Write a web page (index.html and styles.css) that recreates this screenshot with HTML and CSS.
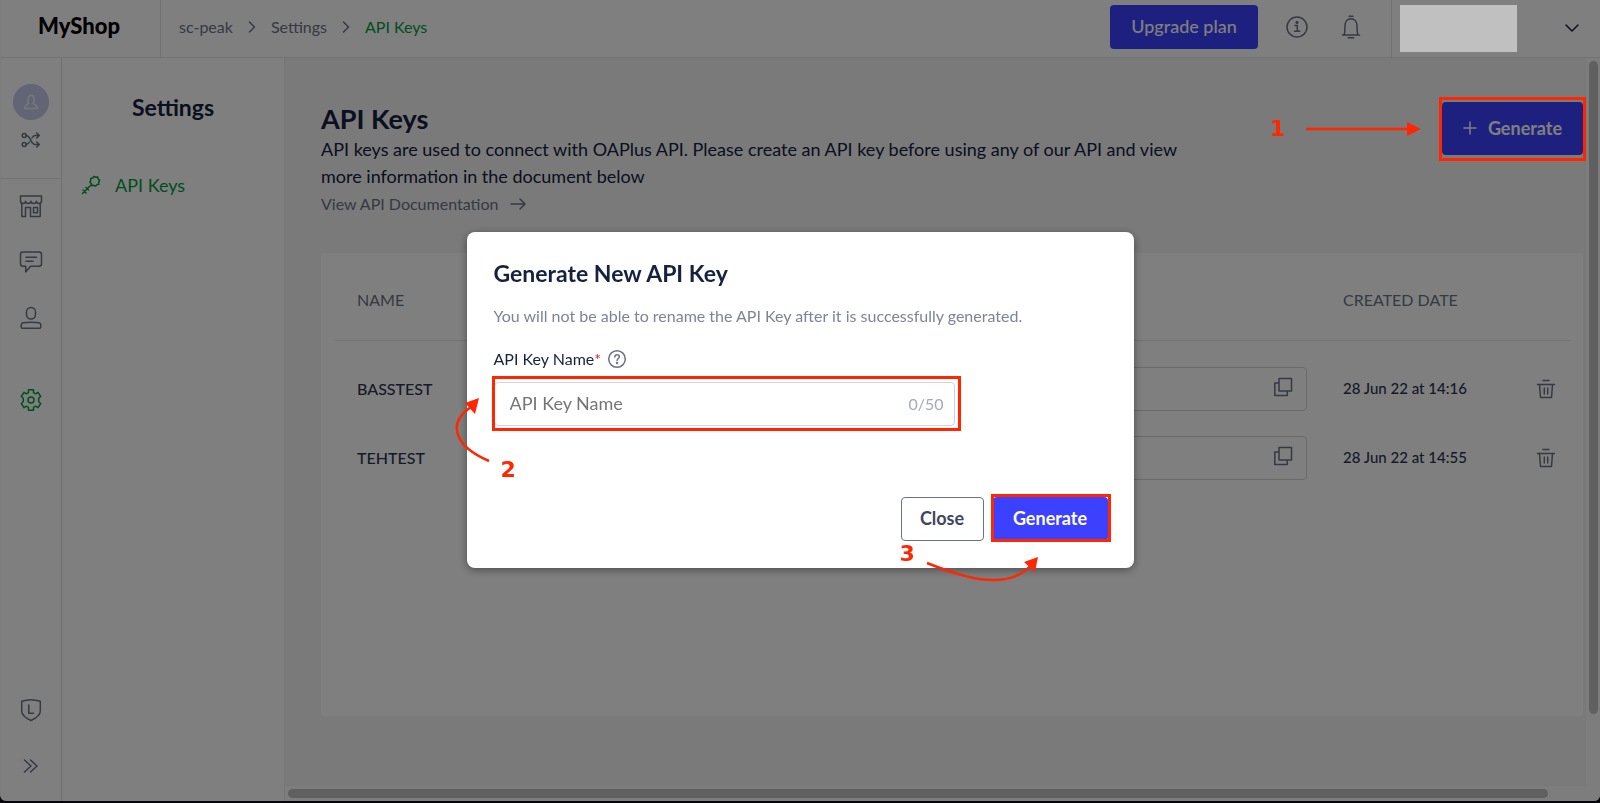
FILE: index.html
```html
<!DOCTYPE html>
<html lang="en">
<head>
	<title>API Keys - MyShop</title>
	<meta charset="UTF-8">
	<link rel="stylesheet" href="styles.css">
</head>
<body>
	<div class="window">
		<header class="topbar">
			<div class="logo">MyShop</div>
			<nav class="breadcrumb" aria-label="Breadcrumb">
				<a href="#">sc-peak</a>
				<svg width="8" height="12" viewBox="0 0 8 12"><path d="M1.5 1l5 5-5 5" /></svg>
				<a href="#">Settings</a>
				<svg width="8" height="12" viewBox="0 0 8 12"><path d="M1.5 1l5 5-5 5" /></svg>
				<a href="#" class="current">API Keys</a>
			</nav>
			<button type="button" class="btn primary upgrade">Upgrade plan</button>
			<button type="button" class="icon_button info" aria-label="Information">
				<svg width="24" height="24" viewBox="0 0 24 24"><circle cx="12" cy="12" r="10" /><path d="M10 10.5h2.3v5.5M9.5 16.3h5.3" /><circle cx="12" cy="7.4" r="0.8" class="dot" /></svg>
			</button>
			<button type="button" class="icon_button bell" aria-label="Notifications">
				<svg width="24" height="24" viewBox="0 0 24 24"><path d="M10 1.2h4M9.3 22.8h5.4M3.5 20h17M5 20c1-2 .9-4 .9-8.500C5.900 6.500 8.500 3.700 12 3.700s6.100 2.800 6.100 7.800c0 4.500 0 6.500 .9 8.500" /></svg>
			</button>
			<div class="account">
				<div class="account_name"></div>
				<button type="button" class="icon_button dark" aria-label="Account menu">
					<svg width="16" height="10" viewBox="0 0 16 10"><path d="M2 2l6 6 6-6" /></svg>
				</button>
			</div>
		</header>
		<div class="main">
			<nav class="rail" aria-label="Main">
				<div class="rail_top">
					<a href="#" class="avatar" aria-label="Profile">
						<svg width="16" height="16" viewBox="0 0 16 16"><path d="M5.800 9.200C4.300 7.500 4.400 1.200 8 1.200s3.700 6.300 2.200 8c.5 1.500 4.300 1.300 4.300 5.300h-13c0-4 3.800-3.800 4.300-5.300z" /></svg>
					</a>
					<a href="#" aria-label="Switch shop">
						<svg width="20" height="16" viewBox="0 0 20 16"><circle cx="3.200" cy="3.500" r="2" /><circle cx="3.200" cy="12.500" r="2" /><path d="M5 3.500c5 0 4.500 9 9 9h4M5 12.500c2 0 2.700-1 3.500-2.500M11 6c.8-1.500 1.500-2.500 3-2.500h4M15.700 1l2.600 2.500L15.700 6M15.700 10l2.600 2.500-2.600 2.500" /></svg>
					</a>
				</div>
				<a href="#" aria-label="Store">
					<svg width="24" height="24" viewBox="0 0 24 24"><path d="M1.500 2h21v5c0 1.500-1 2.500-2.500 2.500S17.400 8.500 17.400 7.300c0 1.300-1.200 2.200-2.700 2.200S12 8.500 12 7.300c0 1.300-1.200 2.200-2.700 2.200s-2.700-1-2.700-2.200c0 1.300-1.100 2.200-2.600 2.200S1.500 8.500 1.500 7zM2.800 9.300v13.200h3.700v-9h5v9h9.700V9.300M14.500 13.500h4v5.200h-4z" /></svg>
				</a>
				<a href="#" aria-label="Chat">
					<svg width="24" height="24" viewBox="0 0 24 24"><path d="M4 2h16c1.500 0 2.500 1 2.500 2.500v9.300c0 1.500-1 2.500-2.500 2.500h-8.500L6.700 22v-5.700H4c-1.500 0-2.500-1-2.500-2.500V4.500C1.500 3 2.500 2 4 2zM7 7.200h10.500M7 11.300h7" /></svg>
				</a>
				<a href="#" aria-label="Contacts">
					<svg width="24" height="24" viewBox="0 0 24 24"><rect x="7.500" y="1.500" width="9" height="11.500" rx="4.500" /><path d="M2.200 19c0-1.500 .8-2 2-2.200 5-.8 10.600-.8 15.600 0 1.200.2 2 .7 2 2.200v2c0 .8-.5 1.200-1.200 1.200H3.400c-.7 0-1.200-.4-1.200-1.200z" /></svg>
				</a>
				<a href="#" class="active" aria-label="Settings">
					<svg width="24" height="24" viewBox="0 0 24 24"><path d="M9.500 1.800h5v2.900l2 1.100 2.500-1.500 2.700 4.200-2 1.700v3.600l2 1.700-2.700 4.200-2.500-1.500-2 1.100v2.900h-5v-2.900l-2-1.100L5 19.700l-2.700-4.200 2-1.700v-3.600l-2-1.700L5 4.300l2.500 1.500 2-1.100z" /><circle cx="12" cy="12" r="3" /></svg>
				</a>
				<a href="#" class="legal" aria-label="Legal">
					<svg width="24" height="24" viewBox="0 0 24 24"><path d="M2.700 3.300c6-2 12.600-2 18.600 0V13c0 5-5 7.500-9.300 9.500C7.700 20.500 2.700 18 2.700 13zM9.800 7v8.300h4.700" /></svg>
				</a>
				<a href="#" aria-label="Expand menu">
					<svg width="24" height="24" viewBox="0 0 24 24"><path d="M5.500 6l6.500 6-6.500 6M11.500 6l6.500 6-6.500 6" /></svg>
				</a>
			</nav>
			<aside class="submenu">
				<h2>Settings</h2>
				<a href="#">
					<svg width="20" height="20" viewBox="0 0 20 20"><path d="M10.500 9.500L1.500 18.500M2 15l3 3M5 12.500l2.500 2.500M9.700 3.500l2-.4 1.100-1.700 1.900 .9 2-.3 .5 2 1.500 1.400-1 1.700 .2 2.100-2 .4-1.300 1.600-1.800-.9-2.100 .2-.4-2-1.500-1.400 1-1.700z" /></svg>
					API Keys
				</a>
			</aside>
			<div class="scroller">
				<main class="content">
					<div class="intro">
						<div class="intro_text">
							<h1>API Keys</h1>
							<p>API keys are used to connect with OAPlus API. Please create an API key before using any of our API and view more information in the document below</p>
							<a href="#">View API Documentation
								<svg width="16" height="12" viewBox="0 0 16 12"><path d="M1 6h13.500M10 1l5 5-5 5" /></svg>
							</a>
						</div>
						<button type="button" class="btn primary generate">
							<svg width="14" height="14" viewBox="0 0 14 14"><path d="M7 1v12M1 7h12" /></svg>
							Generate
						</button>
					</div>
					<div class="card">
						<table>
							<thead>
								<tr><th class="name">NAME</th><th></th><th class="date">CREATED DATE</th><th class="action"></th></tr>
							</thead>
							<tbody>
								<tr>
									<td class="name">BASSTEST</td>
									<td class="key_cell"><div class="key"><button type="button" class="icon_button" aria-label="Copy key"><svg width="20" height="20" viewBox="0 0 20 20"><path d="M6 1.500h12.500V14H6zM6 6H1.800v12.500h12.500V14" /></svg></button></div></td>
									<td>28 Jun 22 at 14:16</td>
									<td class="action"><button type="button" class="icon_button" aria-label="Delete BASSTEST"><svg width="20" height="20" viewBox="0 0 20 20"><path d="M7 1.500h6M1.500 5.500h17M3.500 5.500l1 13h11l1-13M8.300 9v6M11.700 9v6" /></svg></button></td>
								</tr>
								<tr>
									<td class="name">TEHTEST</td>
									<td class="key_cell"><div class="key"><button type="button" class="icon_button" aria-label="Copy key"><svg width="20" height="20" viewBox="0 0 20 20"><path d="M6 1.500h12.500V14H6zM6 6H1.800v12.500h12.500V14" /></svg></button></div></td>
									<td>28 Jun 22 at 14:55</td>
									<td class="action"><button type="button" class="icon_button" aria-label="Delete TEHTEST"><svg width="20" height="20" viewBox="0 0 20 20"><path d="M7 1.500h6M1.500 5.500h17M3.500 5.500l1 13h11l1-13M8.300 9v6M11.700 9v6" /></svg></button></td>
								</tr>
							</tbody>
						</table>
					</div>
				</main>
				<div class="track_y"><div class="thumb"></div></div>
				<div class="track_x"><div class="thumb"></div></div>
			</div>
		</div>
	</div>

	<div class="overlay">
		<div class="account_mask"></div>
		<!-- Step 1 -->
		<div class="step_one">
			<span class="step">1</span>
			<svg width="116" height="14" viewBox="0 0 116 14"><path d="M1 7h104" /><path class="head" d="M102 0l14 7-14 7z" /></svg>
			<div class="frame"></div>
		</div>
		<form class="modal" role="dialog" aria-labelledby="modal_title">
			<h2 id="modal_title">Generate New API Key</h2>
			<p>You will not be able to rename the API Key after it is successfully generated.</p>
			<label for="key_name">API Key Name<span class="required">*</span>
				<svg width="20" height="20" viewBox="0 0 20 20"><circle cx="10" cy="10" r="8.300" /><path d="M7.800 8c0-1.500 1-2.200 2.300-2.200s2.200 .8 2.200 2c0 1.700-2.200 1.700-2.200 3.800" /><circle cx="10.100" cy="14" r="0.500" /></svg>
			</label>
			<div class="field">
				<input type="text" id="key_name" maxlength="50" placeholder="API Key Name">
				<span class="count">0/50</span>
				<div class="frame"></div>
			</div>
			<div class="buttons">
				<button type="button" class="btn close">Close</button>
				<div class="submit">
					<button type="submit" class="btn primary">Generate</button>
					<div class="frame"></div>
				</div>
			</div>
			<!-- Steps 2 and 3 -->
			<span class="step step_two">2</span>
			<span class="step step_three">3</span>
			<svg class="arrows" width="667" height="335" viewBox="0 0 667 335">
				<path d="M22 229C-13 214-20 191 4 175" />
				<path class="head" d="M12 166L8 182-2 171z" />
				<path d="M460 331C490 343 540 362 565 332" />
				<path class="head" d="M571 325L568 340 557 330z" />
			</svg>
		</form>
	</div>
</body>
</html>
```

FILE: styles.css
```css
* {
	box-sizing: border-box;
}

body {
	margin: 0;
	height: 100vh;
	overflow: hidden;
	background-color: #0a0a14;
	color: #15213f;
	font-family: Lato, "Liberation Sans", sans-serif;
	font-size: 16px;
}

h1, h2, p {
	margin: 0;
}

a {
	color: inherit;
	text-decoration: none;
}

button, input {
	font-family: inherit;
}

svg {
	display: block;
	flex: none;
	fill: none;
	stroke: currentColor;
	stroke-width: 1.5;
	stroke-linecap: round;
	stroke-linejoin: round;
}

.dot {
	fill: currentColor;
}

.window {
	height: calc( 100vh - 2px );
	display: flex;
	flex-direction: column;
	background-color: white;
	border-left: 1px solid #f8f8f8;
	border-radius: 0 0 6px 6px;
	overflow: hidden;
}

.btn {
	height: 44px;
	border: none;
	border-radius: 4px;
	padding: 0 0 2px;
	font-size: 18px;
	font-weight: 700;
}

.primary {
	background-color: #3c40ff;
	color: white;
}

.icon_button {
	padding: 0;
	border: none;
	background: none;
	color: #6b7285;
}

.dark {
	color: #15213f;
}

/* Top bar */

.topbar {
	flex: none;
	height: 58px;
	display: flex;
	align-items: center;
	border-bottom: 1px solid #e4e4e4;
	padding-bottom: 4px;
}

.logo {
	width: 160px;
	height: 57px;
	line-height: 52px;
	text-align: center;
	font-size: 22px;
	font-weight: 900;
	color: black;
	border-right: 1px solid #e4e4e4;
	margin-bottom: -4px;
	padding-right: 3px;
}

.breadcrumb {
	flex: 1;
	display: flex;
	align-items: center;
	gap: 15px;
	padding-left: 18px;
	color: #6b7285;
}

.current {
	color: #009c3c;
}

.upgrade {
	width: 148px;
	margin-right: 27px;
	font-weight: 500;
}

.info {
	margin-right: 30px;
}

.bell {
	margin-right: 28px;
}

.account {
	height: 57px;
	width: 209px;
	margin-bottom: -4px;
	padding: 0 20px 2px 0;
	display: flex;
	align-items: center;
	justify-content: space-between;
	border-left: 1px solid #e4e4e4;
}

/* Side menus */

.main {
	flex: 1;
	display: flex;
	min-height: 0;
}

.rail {
	flex: none;
	width: 61px;
	display: flex;
	flex-direction: column;
	align-items: center;
	gap: 32px;
	color: #6b7285;
	border-right: 1px solid #e0e0e0;
	padding-bottom: 23px;
}

.rail_top {
	align-self: stretch;
	height: 121px;
	display: flex;
	flex-direction: column;
	align-items: center;
	gap: 12px;
	padding-top: 26px;
	margin-bottom: -17px;
	border-bottom: 1px solid #e4e4e4;
}

.avatar {
	width: 36px;
	height: 36px;
	display: flex;
	align-items: center;
	justify-content: center;
	border-radius: 50%;
	background-color: #c2cbec;
	color: #f0f0f0;
}

.active {
	margin-top: 26px;
	color: #009c3c;
}

.legal {
	margin-top: auto;
}

.submenu {
	flex: none;
	width: 223px;
	border-right: 1px solid #ececec;
}

.submenu h2 {
	padding-top: 35px;
	line-height: 28px;
	font-size: 23px;
	text-align: center;
}

.submenu a {
	display: flex;
	align-items: center;
	gap: 14px;
	margin-top: 52px;
	padding-left: 19px;
	line-height: 24px;
	font-size: 18px;
	color: #009c3c;
}

/* Content */

.scroller {
	flex: 1;
	min-width: 0;
	display: grid;
	grid-template-columns: 1fr 15px;
	grid-template-rows: 1fr 16px;
	background-color: #fafafa;
}

.content {
	background-color: #f4f4f4;
	padding: 44px 2px 0 36px;
	display: flex;
	flex-direction: column;
}

.intro {
	display: flex;
	justify-content: space-between;
	align-items: flex-start;
}

.intro_text {
	max-width: 870px;
}

.intro h1 {
	line-height: 34px;
	font-size: 27px;
}

.intro p {
	line-height: 27px;
	font-size: 18px;
}

.intro a {
	display: flex;
	align-items: center;
	gap: 12px;
	line-height: 27px;
	color: #6b7285;
}

.generate {
	display: flex;
	align-items: center;
	justify-content: center;
	gap: 11px;
	width: 141px;
	height: 53px;
}

.card {
	flex: 1;
	margin: 36px 0 69px;
	padding: 0 12px 0 14px;
	border-radius: 4px;
	background-color: white;
}

table {
	width: 100%;
	table-layout: fixed;
	border-collapse: collapse;
}

th {
	height: 87px;
	padding: 6px 0 0 22px;
	border-bottom: 1px solid #e4e4e4;
	text-align: left;
	font-weight: 400;
	color: #6b7285;
}

td {
	height: 69px;
	padding: 0 0 2px 22px;
	font-size: 15px;
	font-weight: 500;
	color: #2c3550;
}

td.name {
	font-size: 16px;
}

tbody:before {
	content: "";
	display: block;
	height: 14px;
}

.name {
	width: 280px;
}

.date {
	width: 194px;
}

th.action {
	width: 56px;
}

td.action {
	padding: 2px 0 0 21px;
}

td.key_cell {
	padding: 0 14px 0 0;
}

.key {
	height: 44px;
	display: flex;
	align-items: center;
	justify-content: flex-end;
	padding: 0 13px 4px 0;
	border: 1px solid #d6d6d6;
	border-radius: 4px;
}

.track_y {
	border-left: 1px solid #f0f0f0;
	padding: 3px 2px 71px 3px;
}

.track_x {
	border-top: 1px solid #f0f0f0;
	padding: 3px 37px 3px 3px;
}

.thumb {
	height: 100%;
	border-radius: 5px;
	background-color: #c0c0c0;
}

/* Dimmed layer and dialog */

.overlay {
	position: fixed;
	top: 0;
	left: 0;
	right: 0;
	bottom: 0;
	display: flex;
	align-items: center;
	justify-content: center;
	background-color: rgba( 0, 0, 0, 0.5 );
}

.account_mask {
	position: absolute;
	top: 5px;
	right: 83px;
	width: 117px;
	height: 47px;
	background-color: #c0c0c0;
}

.modal {
	position: relative;
	width: 667px;
	margin-bottom: 3px;
	padding: 27px 26px 27px 27px;
	border-radius: 8px;
	background-color: white;
	box-shadow: 0 2px 8px rgba( 0, 0, 0, 0.4 );
}

.modal h2 {
	line-height: 28px;
	font-size: 23px;
}

.modal p {
	margin-top: 18px;
	line-height: 22px;
	color: #7c8499;
}

.modal label {
	display: flex;
	align-items: center;
	margin-top: 20px;
	line-height: 24px;
}

.modal label svg {
	margin-left: 6px;
	color: #6b7285;
}

.required {
	color: #e02020;
}

.field {
	position: relative;
	width: 461px;
	margin-top: 11px;
}

.field input {
	display: block;
	width: 100%;
	height: 44px;
	padding: 0 60px 2px 15px;
	border: 1px solid #d0d3d9;
	border-radius: 4px;
	font-size: 18px;
}

.field input::placeholder {
	color: #757575;
}

.count {
	position: absolute;
	right: 11px;
	top: 0;
	line-height: 44px;
	color: #a3a9b8;
}

.buttons {
	display: flex;
	justify-content: flex-end;
	gap: 9px;
	margin-top: 71px;
}

.close {
	width: 83px;
	border: 1px solid #6b7285;
	background-color: white;
	color: #3d4760;
}

.submit {
	position: relative;
}

.submit .btn {
	width: 115px;
}

/* Numbered steps */

.frame {
	position: absolute;
	border: 3px solid #ff2600;
	pointer-events: none;
}

.field .frame {
	top: -6px;
	right: -6px;
	bottom: -5px;
	left: -2px;
}

.submit .frame {
	top: -3px;
	right: -3px;
	bottom: -1px;
	left: -2px;
}

.step {
	color: #ff2600;
	font-family: "DejaVu Sans", sans-serif;
	font-size: 22px;
	font-weight: 700;
	line-height: 26px;
}

.overlay svg path.head {
	fill: #ff2600;
	stroke: none;
}

.step_one {
	position: absolute;
	top: 97px;
	right: 14px;
	display: flex;
	align-items: center;
	color: #ff2600;
}

.step_one svg, .arrows {
	color: #ff2600;
	stroke-width: 2.5;
	stroke-linecap: butt;
}

.step_one svg {
	margin: 0 18px 0 20px;
}

.step_one .frame {
	position: static;
	width: 147px;
	height: 64px;
}

.step_two {
	position: absolute;
	left: 34px;
	top: 225px;
}

.step_three {
	position: absolute;
	left: 433px;
	top: 309px;
}

.arrows {
	position: absolute;
	top: 0;
	left: 0;
	overflow: visible;
	pointer-events: none;
}
```
